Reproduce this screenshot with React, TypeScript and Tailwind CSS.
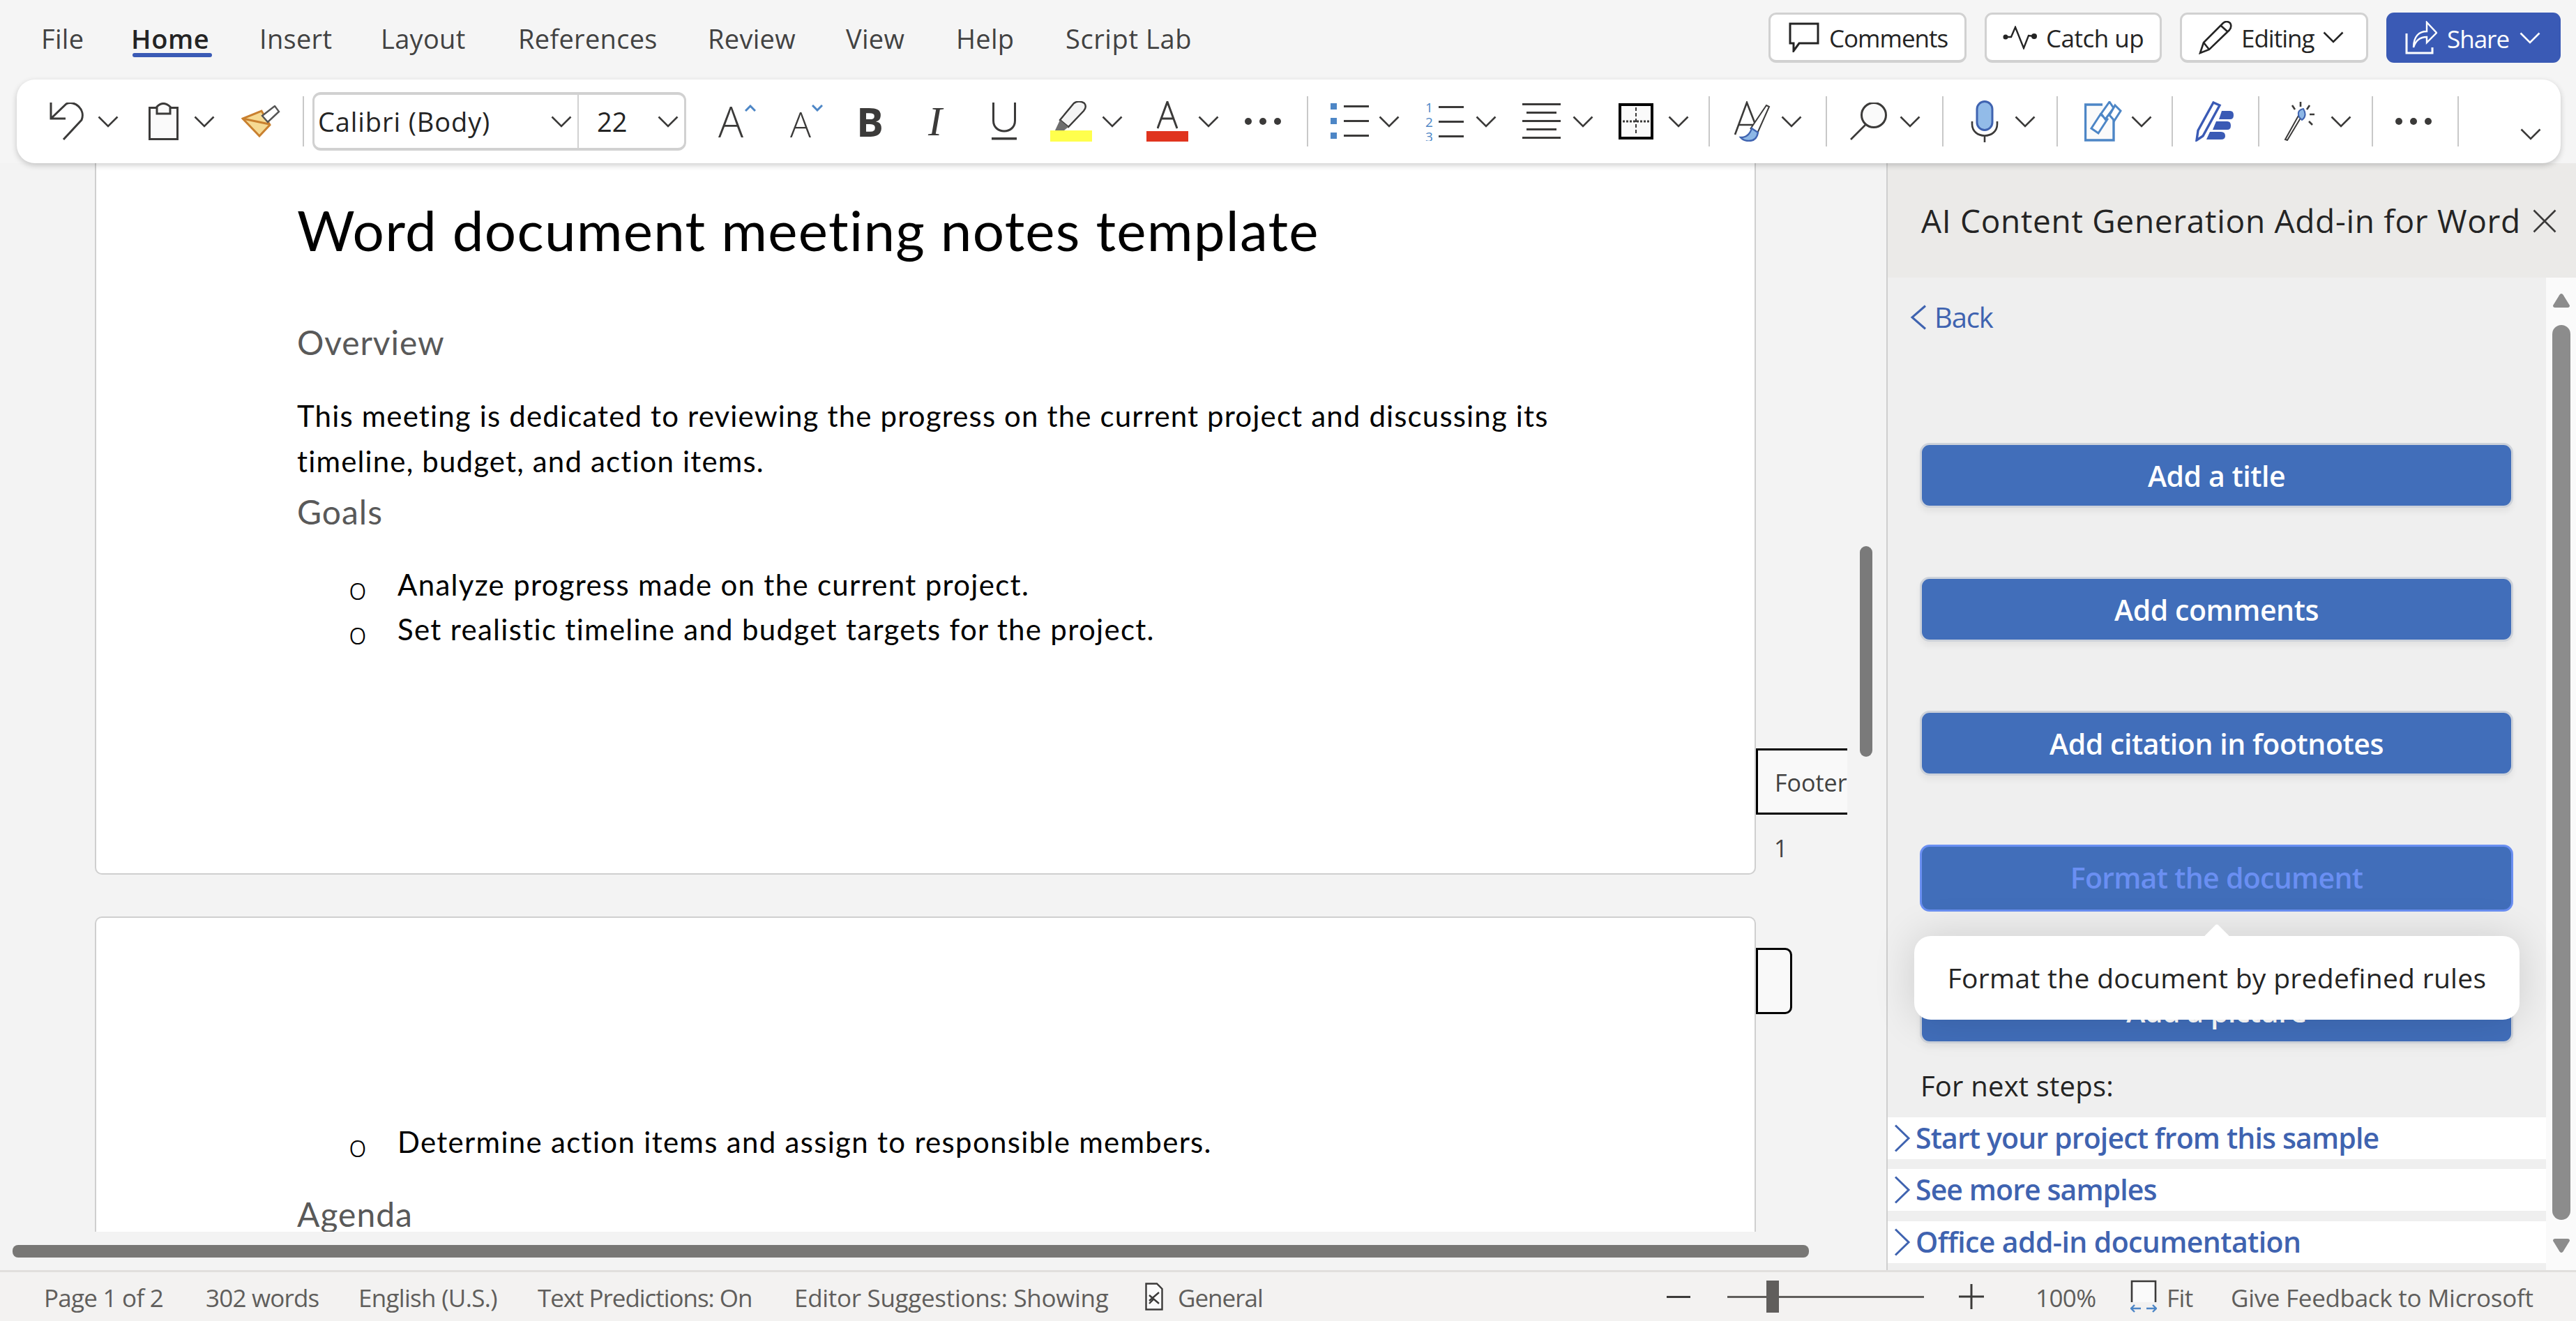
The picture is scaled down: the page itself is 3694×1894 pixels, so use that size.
import React from "react";

const Chev = ({ className = "", color = "#3b3a39" }: { className?: string; color?: string }) => (
  <svg width="30" height="17" viewBox="0 0 30 17" className={"shrink-0 " + className}>
    <polyline points="1.5,1.5 15,15 28.5,1.5" fill="none" stroke={color} strokeWidth="2.6" />
  </svg>
);

const Sep = ({ className = "" }: { className?: string }) => <div className={"w-[2px] h-[72px] shrink-0 bg-[#c8c8c8] " + className} />;

const Dots = ({ className = "", w = 52 }: { className?: string; w?: number }) => (
  <svg width={w} height="10" viewBox={`0 0 ${w} 10`} className={"shrink-0 " + className}>
    <circle cx="5" cy="5" r="5" fill="#3b3a39" />
    <circle cx={w / 2} cy="5" r="5" fill="#3b3a39" />
    <circle cx={w - 5} cy="5" r="5" fill="#3b3a39" />
  </svg>
);

const BulletsIcon = ({ className = "" }: { className?: string }) => (
  <svg width="55" height="52" viewBox="0 0 55 52" className={"shrink-0 " + className}>
    {[0, 21, 42].map((y) => (
      <g key={y}>
        <rect x="0" y={y} width="9" height="9" fill="#4d86c6" />
        <rect x="19" y={y + 3} width="36" height="3" fill="#3b3a39" />
      </g>
    ))}
  </svg>
);

const NumberingIcon = ({ className = "" }: { className?: string }) => (
  <svg width="55" height="56" viewBox="0 0 55 56" className={"shrink-0 " + className}>
    {["1", "2", "3"].map((n, i) => (
      <g key={n}>
        <text x="0" y={15 + i * 21} fontSize="19" fill="#4d86c6" fontFamily="Open Sans, sans-serif">{n}</text>
        <rect x="19" y={6 + i * 21} width="36" height="3" fill="#3b3a39" />
      </g>
    ))}
  </svg>
);

const AlignIcon = ({ className = "" }: { className?: string }) => (
  <svg width="55" height="52" viewBox="0 0 55 52" className={"shrink-0 " + className}>
    <rect x="0" y="0" width="55" height="3" fill="#3b3a39" />
    <rect x="6" y="12" width="43" height="3" fill="#3b3a39" />
    <rect x="0" y="24" width="55" height="3" fill="#3b3a39" />
    <rect x="6" y="36" width="43" height="3" fill="#3b3a39" />
    <rect x="0" y="48" width="55" height="3" fill="#3b3a39" />
  </svg>
);

export default function App() {
  return (
    <div className="w-[3694px] h-[1894px] flex flex-col overflow-hidden bg-[#f5f5f5] font-['Open_Sans',sans-serif]">
      {/* Tabs and command buttons */}
      <div className="h-[114px] shrink-0 flex items-start bg-[#f5f5f5]">
        <div className="flex items-start h-[96px] text-[38px] tracking-[0.3px] text-[#424242] leading-[50px] pt-[30px] whitespace-nowrap">
          <span className="ml-[59px] w-[129px]">File</span>
          <span className="relative w-[184px] font-semibold text-[#242424] tracking-[0.6px]">
            Home
            <span className="absolute left-[2px] top-[46px] w-[114px] h-[6px] rounded-[3px] bg-[#3a5ab5]" />
          </span>
          <span className="w-[174px]">Insert</span>
          <span className="w-[197px]">Layout</span>
          <span className="w-[272px]">References</span>
          <span className="w-[198px]">Review</span>
          <span className="w-[158px]">View</span>
          <span className="w-[157px]">Help</span>
          <span className="tracking-[0.6px]">Script Lab</span>
        </div>
        <div className="ml-auto mr-[22px] mt-[18px] flex items-center gap-[26px] text-[35px] leading-[50px] tracking-[-1px] text-[#242424] whitespace-nowrap">
          <div className="w-[284px] h-[72px] flex items-center pl-[26px] bg-white border-[3px] border-b-[4px] border-[#d1d1d1] rounded-[11px]">
            <svg width="44" height="43" viewBox="0 0 44 43" className="shrink-0">
              <path d="M2 2 H42 V30 H15 L7 41 V30 H2 Z" fill="none" stroke="#242424" strokeWidth="3" />
            </svg>
            <span className="ml-[14px] pt-[3px]">Comments</span>
          </div>
          <div className="w-[254px] h-[72px] flex items-center pl-[23px] bg-white border-[3px] border-b-[4px] border-[#d1d1d1] rounded-[11px]">
            <svg width="50" height="34" viewBox="0 0 50 34" className="shrink-0">
              <circle cx="4" cy="16" r="3.5" fill="#242424" />
              <circle cx="45" cy="15" r="4" fill="#242424" />
              <polyline points="4,16 12,16 18,2 30,32 37,14 45,15" fill="none" stroke="#242424" strokeWidth="2.4" />
            </svg>
            <span className="ml-[12px] pt-[3px] tracking-[-0.5px]">Catch up</span>
          </div>
          <div className="w-[270px] h-[72px] flex items-center pl-[24px] bg-white border-[3px] border-b-[4px] border-[#d1d1d1] rounded-[11px]">
            <svg width="48" height="48" viewBox="0 0 48 48" className="shrink-0">
              <path d="M2 46 L7 31 L35 3 Q40 -1 45 3 Q48 8 44 13 L15 41 Z M7 31 L15 41 M32 7 L42 16" fill="#fff" stroke="#242424" strokeWidth="2.6" />
            </svg>
            <span className="ml-[13px] pt-[3px]">Editing</span>
            <Chev className="ml-[13px]" color="#242424" />
          </div>
          <div className="w-[250px] h-[72px] flex items-center pl-[27px] bg-[#3a5ab5] rounded-[11px] text-white">
            <svg width="46" height="48" viewBox="0 0 46 48" className="shrink-0">
              <path d="M2 18 V46 H39 V38" fill="none" stroke="#fff" strokeWidth="3" />
              <path d="M12 38 C12 22 20 15 31 15 V2 L45 17 L31 31 V23 C22 23 15 28 12 38 Z" fill="none" stroke="#fff" strokeWidth="2.4" />
            </svg>
            <span className="ml-[14px] pt-[3px] font-medium">Share</span>
            <Chev className="ml-[15px]" color="#ffffff" />
          </div>
        </div>
      </div>

      {/* Ribbon */}
      <div className="relative z-20 mx-[22px] ml-[24px] h-[120px] shrink-0 flex items-center bg-white rounded-[26px] shadow-[0_3px_8px_rgba(0,0,0,0.2)]">
        <svg width="52" height="54" viewBox="0 0 52 54" className="ml-[46px] shrink-0">
          <path d="M3 0 V23 H24 M3 23 L25 2 C37 -4 53 10 47 25 L21 53" fill="none" stroke="#3b3a39" strokeWidth="3" />
        </svg>
        <Chev className="ml-[18px]" />
        <svg width="43" height="54" viewBox="0 0 43 54" className="ml-[43px] shrink-0">
          <rect x="1.5" y="7.5" width="40" height="45" fill="#fafafa" stroke="#3b3a39" strokeWidth="3" />
          <path d="M12 16 V6 Q21 -3 31 6 V16 Z" fill="#fafafa" stroke="#3b3a39" strokeWidth="3" />
        </svg>
        <Chev className="ml-[22px]" />
        <svg width="56" height="46" viewBox="0 0 56 46" className="ml-[38px] shrink-0">
          <path d="M2 19 L26 44 L41 28 L29 8 Z" fill="#f6da93" stroke="#c9802f" strokeWidth="3" />
          <path d="M2 19 L40 27" stroke="#c9802f" strokeWidth="3" />
          <path d="M30 15 L38 24 L54 9 L48 1 Z" fill="#fff" stroke="#555" strokeWidth="2.4" />
        </svg>
        <Sep className="ml-[32px]" />
        <div className="ml-[12px] w-[536px] h-[84px] shrink-0 flex items-center bg-white border-[3px] border-t-[4px] border-b-[4px] border-[#d1d1d1] rounded-[12px] text-[38px] tracking-[0.9px] text-[#242424] whitespace-nowrap">
          <span className="ml-[5px] w-[334px]">Calibri (Body)</span>
          <Chev className="" />
          <div className="ml-[8px] w-[2px] h-full bg-[#d1d1d1]" />
          <span className="ml-[26px] w-[87px] tracking-[0px]">22</span>
          <Chev className="" />
        </div>
        <span className="ml-[46px] w-[38px] text-[60px] leading-[60px] font-light text-[#3b3a39] shrink-0">A</span>
        <svg width="16" height="10" viewBox="0 0 16 10" className="mb-[38px] shrink-0">
          <polyline points="1,9 8,2 15,9" fill="none" stroke="#4d86c6" strokeWidth="3" />
        </svg>
        <span className="ml-[49px] mt-[8px] w-[31px] text-[50px] leading-[60px] font-light text-[#3b3a39] shrink-0">A</span>
        <svg width="16" height="10" viewBox="0 0 16 10" className="mb-[38px] shrink-0">
          <polyline points="1,1 8,8 15,1" fill="none" stroke="#4d86c6" strokeWidth="3" />
        </svg>
        <span className="ml-[48px] w-[37px] text-[58px] leading-[60px] font-bold text-[#3b3a39] tracking-[-4px] shrink-0">B</span>
        <span className="ml-[66px] w-[27px] font-['Liberation_Serif',serif] text-[60px] leading-[60px] italic text-[#3b3a39] shrink-0">I</span>
        <div className="ml-[64px] w-[36px] h-[54px] shrink-0 flex flex-col">
          <svg width="36" height="54" viewBox="0 0 36 54">
            <path d="M2.5 0 V26 C2.5 46 33.5 46 33.5 26 V0" fill="none" stroke="#3b3a39" strokeWidth="3" />
            <rect x="0" y="50" width="36" height="3.5" fill="#3b3a39" />
          </svg>
        </div>
        <svg width="60" height="58" viewBox="0 0 60 58" className="ml-[48px] shrink-0">
          <path d="M14 27 L34 3 Q41 -2 49 3 Q53 8 48 14 L26 37 Z" fill="#f4f4f4" stroke="#3b3a39" strokeWidth="2.4" />
          <path d="M14 27 L26 37 L20 42 H7 Z" fill="#6e6e6e" />
          <rect x="0" y="42" width="60" height="16" fill="#ffff4d" />
        </svg>
        <Chev className="ml-[14px]" />
        <div className="ml-[34px] w-[60px] h-[58px] shrink-0 flex flex-col items-center">
          <svg width="30" height="40" viewBox="0 0 30 40">
            <path d="M1 39 L15 1 L29 39 M7 25 H23" fill="none" stroke="#3b3a39" strokeWidth="3" />
          </svg>
          <div className="mt-[3px] w-[60px] h-[15px] bg-[#e0341e]" />
        </div>
        <Chev className="ml-[14px]" />
        <Dots className="ml-[37px]" />
        <Sep className="ml-[37px]" />
        <BulletsIcon className="ml-[32px]" />
        <Chev className="ml-[14px]" />
        <NumberingIcon className="ml-[37px]" />
        <Chev className="ml-[17px]" />
        <AlignIcon className="ml-[37px]" />
        <Chev className="ml-[17px]" />
        <svg width="50" height="52" viewBox="0 0 50 52" className="ml-[36px] shrink-0">
          <rect x="2" y="2" width="46" height="48" fill="#fafafa" stroke="#000" strokeWidth="4" />
          <path d="M25 6 V46" stroke="#3b3a39" strokeWidth="2" strokeDasharray="5 3" />
          <path d="M6 26 H44" stroke="#3b3a39" strokeWidth="3" strokeDasharray="3 2" />
        </svg>
        <Chev className="ml-[21px]" />
        <Sep className="ml-[28px]" />
        <svg width="54" height="58" viewBox="0 0 54 58" className="ml-[34px] shrink-0">
          <path d="M2 48 L19 2 L33 38 M8 34 H30" fill="none" stroke="#3b3a39" strokeWidth="2.6" />
          <path d="M24 40 L47 6 L51 8 L34 46" fill="#fff" stroke="#3b3a39" strokeWidth="2" />
          <path d="M26 39 L35 45 Q33 57 22 57 Q14 57 10 52 Q22 52 26 39 Z" fill="#8db7e6" stroke="#3f63b0" strokeWidth="2.4" />
        </svg>
        <Chev className="ml-[14px]" />
        <Sep className="ml-[34px]" />
        <svg width="54" height="54" viewBox="0 0 54 54" className="ml-[32px] shrink-0">
          <circle cx="35" cy="18" r="17.5" fill="#fafafa" stroke="#3b3a39" strokeWidth="3" />
          <path d="M23 32 L2 53" stroke="#3b3a39" strokeWidth="2.6" />
        </svg>
        <Chev className="ml-[18px]" />
        <Sep className="ml-[31px]" />
        <svg width="40" height="60" viewBox="0 0 40 60" className="ml-[39px] shrink-0">
          <rect x="9" y="1.5" width="22" height="41" rx="11" fill="#92bbe8" stroke="#3f63b0" strokeWidth="3" />
          <path d="M2 30 V34 C2 56 38 56 38 34 V30" fill="none" stroke="#3b3a39" strokeWidth="2.6" />
          <path d="M20 50 V60" stroke="#3b3a39" strokeWidth="2.6" />
        </svg>
        <Chev className="ml-[23px]" />
        <Sep className="ml-[30px]" />
        <svg width="54" height="58" viewBox="0 0 54 58" className="ml-[38px] shrink-0">
          <path d="M26 5 H1.5 V56 H42 V24" fill="#fafafa" stroke="#4d86c6" strokeWidth="3.4" />
          <path d="M23 19 L33 26 L20 46 L10 39 Z" fill="#fff" stroke="#4d86c6" strokeWidth="3" />
          <path d="M36 1 L42 10 L30 26 L24 18 Z" fill="#fff" stroke="#4d86c6" strokeWidth="3" />
          <path d="M44 6 L52 14 L43 28 L36 20 Z" fill="#fff" stroke="#4d86c6" strokeWidth="3" />
        </svg>
        <Chev className="ml-[13px]" />
        <Sep className="ml-[28px]" />
        <svg width="56" height="58" viewBox="0 0 56 58" className="ml-[32px] shrink-0">
          <path d="M38 14 H50 Q55 14 55 20 Q55 26 50 26 H34 Z M30 29 H46 Q51 29 51 35 Q51 41 46 41 H25 Z M21 44 H37 Q43 44 43 50 Q43 55 37 55 H16 Z" fill="#3a5ab5" />
          <path d="M2 56 L4 42 L26 2 L35 6 L11 50 Z" fill="#fff" stroke="#3a5ab5" strokeWidth="3.4" />
        </svg>
        <Sep className="ml-[34px]" />
        <svg width="46" height="56" viewBox="0 0 46 56" className="ml-[35px] shrink-0">
          <path d="M2 54 L22 18 L26 20 L5 55 Z" fill="#fff" stroke="#3b3a39" strokeWidth="2" />
          <path d="M22 22 Q18 12 28 10 Q34 20 26 26 Z" fill="#8db7e6" stroke="#3f63b0" strokeWidth="2" />
          <path d="M24 0 V7 M12 5 L16 11 M37 5 L33 11 M37 18 H44 M36 28 L41 33" stroke="#3b3a39" strokeWidth="2.6" />
        </svg>
        <Chev className="ml-[21px]" />
        <Sep className="ml-[29px]" />
        <Dots className="ml-[32px]" />
        <Sep className="ml-[37px]" />
        <Chev className="ml-[88px] mt-[36px]" />
      </div>

      {/* Main */}
      <div className="flex-1 min-h-0 flex bg-[#f3f3f3]">
        <div className="relative w-[2705px] shrink-0 flex flex-col overflow-hidden font-['Lato',sans-serif]">
          <div className="flex h-[1020px] shrink-0">
            <div className="ml-[136px] w-[2382px] shrink-0 bg-white border-l-2 border-r-2 border-b-2 border-[#cfcfcf] rounded-b-[10px] pl-[288px] pt-[45px] text-black">
              <div className="text-[80px] leading-[100px] tracking-[1.25px] whitespace-nowrap">Word document meeting notes template</div>
              <div className="mt-[77px] text-[48px] leading-[70px] tracking-[0.9px] text-[#595959] whitespace-nowrap">Overview</div>
              <div className="mt-[38px] text-[42px] leading-[65px] tracking-[1.15px] w-[1830px]">This meeting is dedicated to reviewing the progress on the current project and discussing its timeline, budget, and action items.</div>
              <div className="mt-[5px] text-[48px] leading-[70px] tracking-[1px] text-[#595959]">Goals</div>
              <div className="mt-[37px] text-[42px] leading-[64px] tracking-[1.3px] whitespace-nowrap">
                <div className="flex ml-[74px]"><span className="w-[70px] h-[64px] shrink-0 font-['Open_Sans',sans-serif] font-light text-[44px] leading-[74px] tracking-[0px]">o</span><span>Analyze progress made on the current project.</span></div>
                <div className="flex ml-[74px]"><span className="w-[70px] h-[64px] shrink-0 font-['Open_Sans',sans-serif] font-light text-[44px] leading-[74px] tracking-[0px]">o</span><span>Set realistic timeline and budget targets for the project.</span></div>
              </div>
            </div>
            <div className="flex-1 pt-[839px] font-['Open_Sans',sans-serif]">
              <div className="w-[131px] h-[95px] flex items-center pl-[24px] bg-[#f9f9f9] border-y-[3px] border-l-[3px] border-black text-[34px] leading-[46px] text-[#424242] overflow-hidden pt-[3px]">Footer</div>
              <div className="mt-[28px] pl-[26px] text-[34px] leading-[40px] text-[#424242]">1</div>
            </div>
          </div>
          <div className="flex h-[452px] mt-[60px] shrink-0">
            <div className="ml-[136px] w-[2382px] shrink-0 bg-white border-l-2 border-r-2 border-t-2 border-[#cfcfcf] rounded-t-[10px] pl-[288px] pt-[289px] text-black overflow-hidden">
              <div className="flex ml-[74px] text-[42px] leading-[64px] tracking-[1.3px] whitespace-nowrap"><span className="w-[70px] h-[64px] shrink-0 font-['Open_Sans',sans-serif] font-light text-[44px] leading-[74px] tracking-[0px]">o</span><span>Determine action items and assign to responsible members.</span></div>
              <div className="mt-[37px] text-[48px] leading-[70px] tracking-[1px] text-[#595959]">Agenda</div>
            </div>
            <div className="mt-[45px] w-[52px] h-[95px] bg-[#f9f9f9] border-[3px] border-black rounded-r-[10px]" />
          </div>
          <div className="mt-[19px] ml-[18px] w-[2576px] h-[18px] shrink-0 rounded-[8px] bg-[#787775]" />
          <div className="absolute left-[2667px] top-[549px] w-[18px] h-[302px] rounded-[9px] bg-[#7a7a7a]" />
        </div>

        {/* Task pane */}
        <div className="flex-1 min-w-0 flex flex-col border-l-2 border-[#cfcfcf] bg-[#efefef]">
          <div className="h-[164px] shrink-0 flex items-start bg-[#ebeae8] pt-[52px] pl-[48px] text-[#242424] whitespace-nowrap">
            <span className="w-[877px] text-[46px] leading-[60px] tracking-[0.7px] font-medium">AI Content Generation Add-in for Word</span>
            <svg width="34" height="34" viewBox="0 0 34 34" className="mt-[14px] shrink-0">
              <path d="M1.5 1.5 L32.5 32.5 M32.5 1.5 L1.5 32.5" stroke="#3b3a39" strokeWidth="2.6" />
            </svg>
          </div>
          <div className="relative flex-1 min-h-0 flex">
            <div className="flex-1 min-w-0 pt-[27px] flex flex-col whitespace-nowrap">
              <div className="h-[60px] flex items-center pl-[32px] text-[40px] tracking-[-1.2px] text-[#3f63b0]">
                <svg width="24" height="36" viewBox="0 0 24 36" className="shrink-0">
                  <polyline points="22,1.5 3,18 22,34.5" fill="none" stroke="#3f63b0" strokeWidth="3" />
                </svg>
                <span className="ml-[11px]">Back</span>
              </div>
              <div className="mt-[150px] flex flex-col gap-[99px] px-[46px] text-[41px] font-semibold tracking-[-0.45px] text-white">
                <div className="w-[851px] h-[93px] pt-[3px] flex items-center justify-center bg-[#416eba] border-[3px] border-[#cdd2da] rounded-[14px] shadow-[0_6px_8px_rgba(0,0,0,0.05)]">Add a title</div>
                <div className="w-[851px] h-[93px] pt-[3px] flex items-center justify-center bg-[#416eba] border-[3px] border-[#cdd2da] rounded-[14px] shadow-[0_6px_8px_rgba(0,0,0,0.05)]">Add comments</div>
                <div className="w-[851px] h-[93px] pt-[3px] flex items-center justify-center bg-[#416eba] border-[3px] border-[#cdd2da] rounded-[14px] shadow-[0_6px_8px_rgba(0,0,0,0.05)]">Add citation in footnotes</div>
                <div className="w-[851px] h-[96px] flex items-center justify-center bg-[#416eba] border-[3px] border-[#6a8ff2] rounded-[14px] text-[#6a8ff2] tracking-[-0.7px]">Format the document</div>
                <div className="-mt-[3px] w-[851px] h-[93px] pt-[3px] flex items-center justify-center bg-[#416eba] border-[3px] border-[#cdd2da] rounded-[14px] shadow-[0_6px_8px_rgba(0,0,0,0.05)]">Add a picture</div>
              </div>
              <div className="mt-[36px] pl-[47px] h-[50px] flex items-center text-[40px] font-medium tracking-[0.2px] text-[#242424]">For next steps:</div>
              <div className="mt-[20px] h-[60px] flex items-center pl-[9px] bg-white text-[41px] font-semibold tracking-[-0.85px] text-[#3f63b0]">
                <svg width="24" height="40" viewBox="0 0 24 40" className="shrink-0"><polyline points="2,1.5 21,20 2,38.5" fill="none" stroke="#3f63b0" strokeWidth="3" /></svg>
                <span className="ml-[7px]">Start your project from this sample</span>
              </div>
              <div className="mt-[14px] h-[60px] flex items-center pl-[9px] bg-white text-[41px] font-semibold tracking-[-0.9px] text-[#3f63b0]">
                <svg width="24" height="40" viewBox="0 0 24 40" className="shrink-0"><polyline points="2,1.5 21,20 2,38.5" fill="none" stroke="#3f63b0" strokeWidth="3" /></svg>
                <span className="ml-[7px]">See more samples</span>
              </div>
              <div className="mt-[15px] h-[60px] flex items-center pl-[9px] bg-white text-[41px] font-semibold tracking-[-0.6px] text-[#3f63b0]">
                <svg width="24" height="40" viewBox="0 0 24 40" className="shrink-0"><polyline points="2,1.5 21,20 2,38.5" fill="none" stroke="#3f63b0" strokeWidth="3" /></svg>
                <span className="ml-[7px]">Office add-in documentation</span>
              </div>
            </div>
            <div className="w-[43px] shrink-0 flex flex-col items-center bg-[#fafafa] pl-[1px]">
              <svg width="26" height="21" viewBox="0 0 26 21" className="mt-[22px] shrink-0"><path d="M13 1 Q15 1 17 5 L25 18 Q25 21 22 21 H4 Q1 21 1 18 L9 5 Q11 1 13 1 Z" fill="#8c8c8c" /></svg>
              <div className="mt-[25px] w-[26px] h-[1283px] rounded-[13px] bg-[#8c8c8c] shrink-0" />
              <svg width="26" height="21" viewBox="0 0 26 21" className="mt-[27px] shrink-0"><path d="M13 20 Q15 20 17 16 L25 3 Q25 0 22 0 H4 Q1 0 1 3 L9 16 Q11 20 13 20 Z" fill="#8c8c8c" /></svg>
            </div>
            <div className="absolute left-[38px] top-[944px] w-[868px] h-[120px] flex items-center justify-center bg-white rounded-[24px] shadow-[0_0_60px_rgba(0,0,0,0.14)] text-[39px] tracking-[0.3px] text-[#242424] whitespace-nowrap">
              <div className="absolute left-[420px] -top-[12px] w-[28px] h-[28px] rotate-45 rounded-[4px] bg-white" />
              <span className="relative">Format the document by predefined rules</span>
            </div>
          </div>
        </div>
      </div>

      {/* Status bar */}
      <div className="h-[73px] shrink-0 flex items-center border-t-[3px] border-[#e1dfdd] bg-[#f3f2f1] text-[35px] leading-[50px] tracking-[-0.6px] text-[#605e5c] whitespace-nowrap">
        <span className="ml-[63px] pt-[4px] w-[232px] tracking-[-0.75px]">Page 1 of 2</span>
        <span className="pt-[4px] w-[219px] tracking-[-0.8px]">302 words</span>
        <span className="pt-[4px] w-[257px] tracking-[-0.7px]">English (U.S.)</span>
        <span className="pt-[4px] w-[368px] tracking-[-1.05px]">Text Predictions: On</span>
        <span className="pt-[4px] w-[503px] tracking-[-0.3px]">Editor Suggestions: Showing</span>
        <svg width="26" height="40" viewBox="0 0 26 40" className="shrink-0">
          <path d="M1.5 1.5 H17 L24.5 9 V38.5 H1.5 Z" fill="#fafafa" stroke="#3b3a39" strokeWidth="2.4" />
          <path d="M6 26 L20 14 M6 18 L20 30 M6 30 L12 24" stroke="#3b3a39" strokeWidth="2.4" />
        </svg>
        <span className="ml-[21px] pt-[4px] w-[701px] tracking-[-1px]">General</span>
        <div className="w-[34px] h-[3px] bg-[#3b3a39] shrink-0" />
        <div className="ml-[53px] relative w-[282px] h-[3px] bg-[#605e5c] shrink-0">
          <div className="absolute left-[56px] -top-[22px] w-[18px] h-[46px] bg-[#605e5c]" />
        </div>
        <svg width="36" height="36" viewBox="0 0 36 36" className="ml-[50px] shrink-0">
          <path d="M0 18 H36 M18 0 V36" stroke="#3b3a39" strokeWidth="3" />
        </svg>
        <span className="ml-[74px] pt-[4px] w-[136px]">100%</span>
        <svg width="38" height="48" viewBox="0 0 38 48" className="shrink-0">
          <path d="M2 32 V2 H36 V32" fill="#fafafa" stroke="#3b3a39" strokeWidth="2.6" />
          <path d="M1 41 H15 M6 36 L1 41 L6 46 M23 41 H37 M32 36 L37 41 L32 46" fill="none" stroke="#4d86c6" strokeWidth="2.4" />
        </svg>
        <span className="ml-[14px] pt-[4px] w-[92px]">Fit</span>
        <span className="pt-[4px] tracking-[-0.3px]">Give Feedback to Microsoft</span>
      </div>
    </div>
  );
}
